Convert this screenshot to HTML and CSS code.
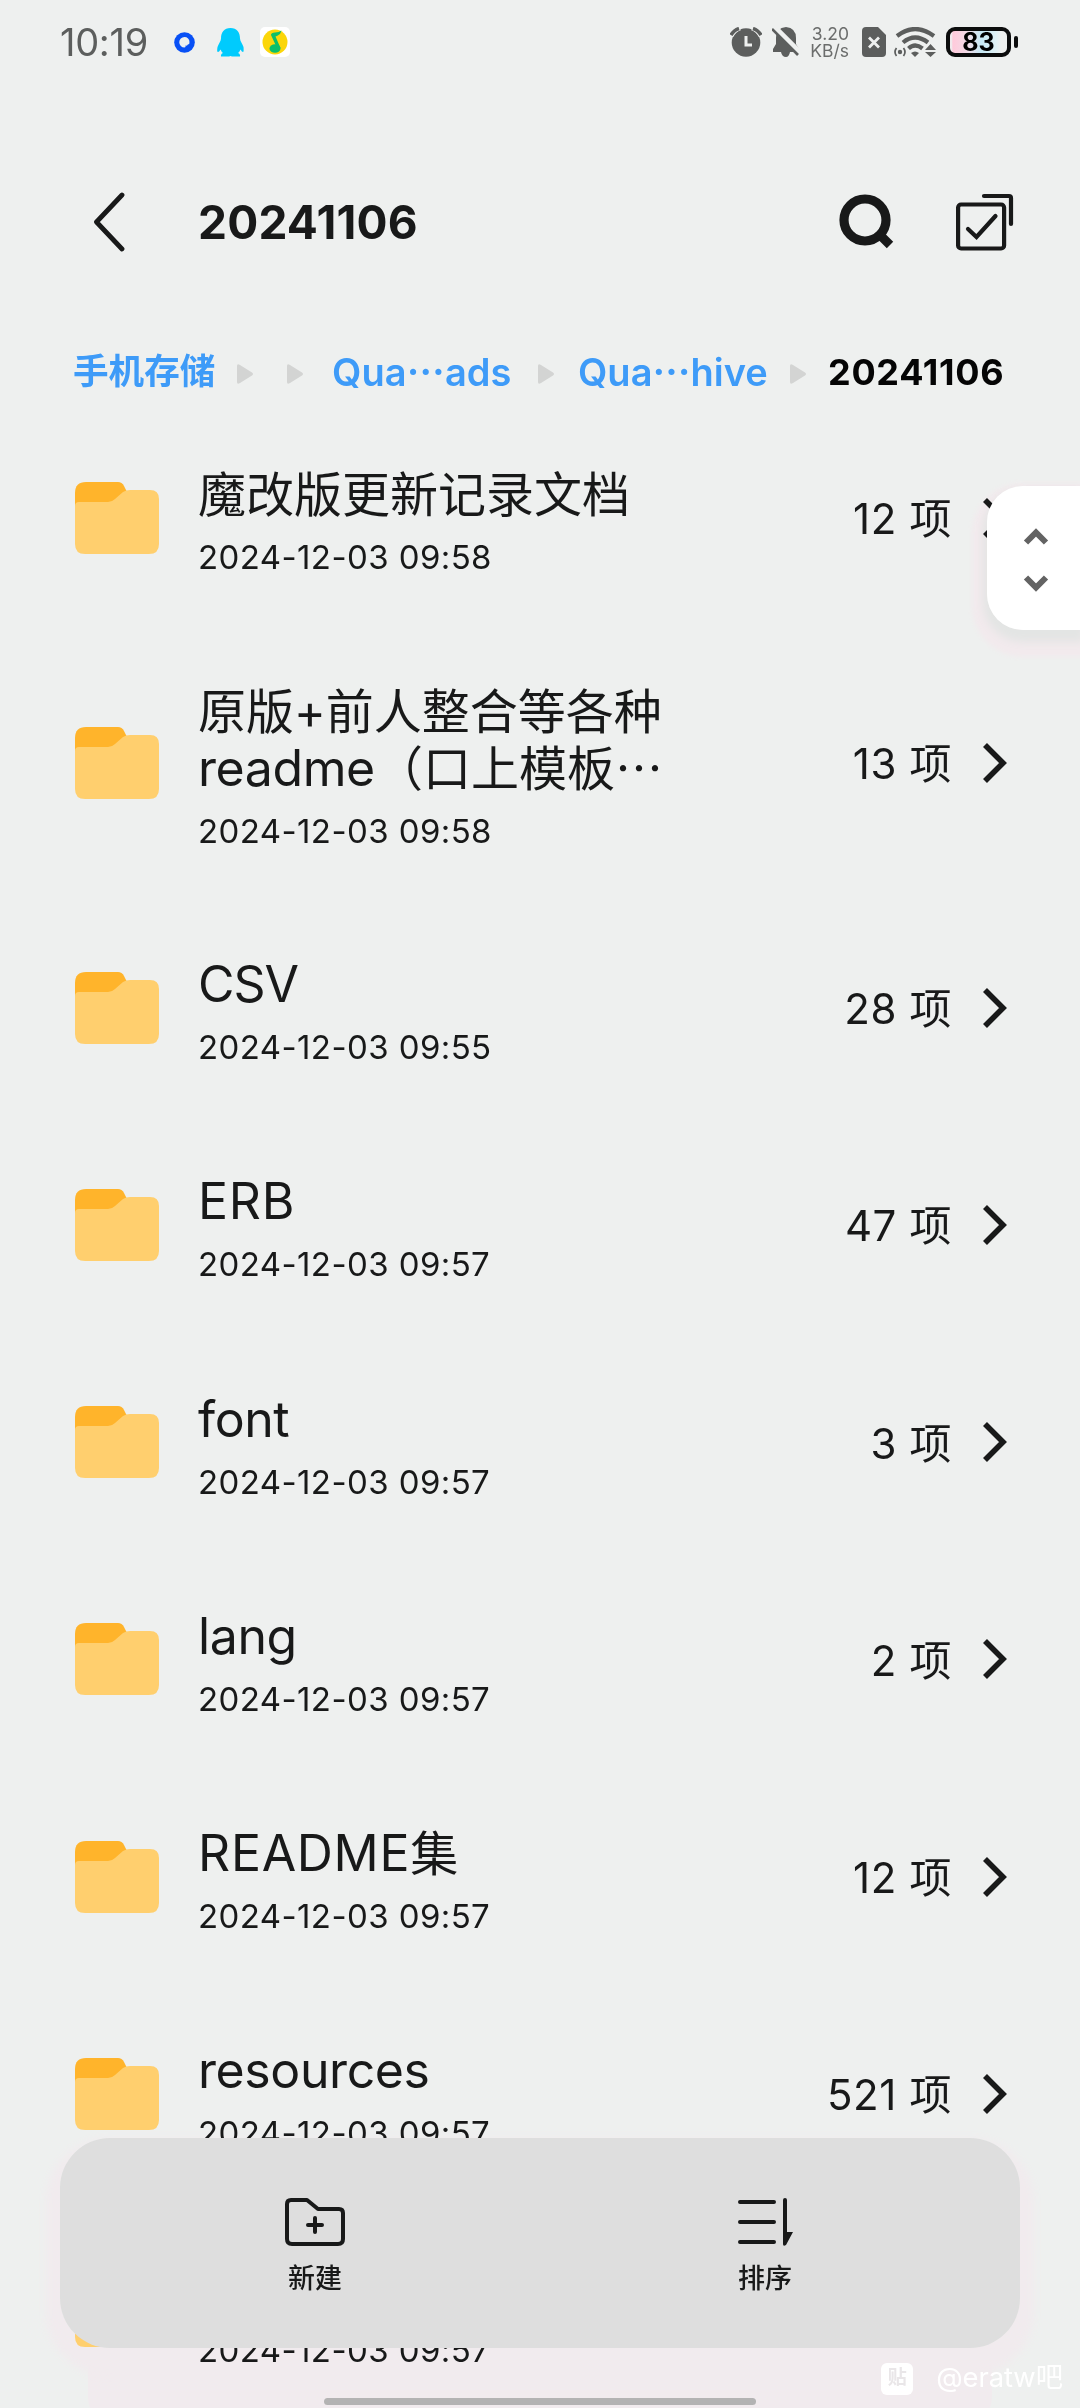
FILE: index.html
```html
<!DOCTYPE html>
<html lang="zh-CN">
<head>
    <meta charset="UTF-8">
    <meta name="viewport" content="width=device-width, initial-scale=1.0">
    <title>20241106</title>
    <link rel="stylesheet" href="styles.css">
</head>
<body>

    <!-- shared icons -->
    <svg class="symbols">
        <symbol id="folder" viewBox="0 0 84 72">
            <path fill="#ffb42b" d="M0 40V11Q0 0 11 0H43Q47 0 49 4L53 12V40Z"/>
            <path fill="#ffcf6e" d="M0 24Q0 20 4 20H33Q37 20 40 17L48 10Q51 8 55 8H75Q84 8 84 17V62Q84 72 74 72H10Q0 72 0 62Z"/>
        </symbol>
        <symbol id="next" viewBox="0 0 26 40">
            <path fill="none" stroke="#181919" stroke-width="5.6" d="M2 2L20 20L2 38"/>
        </symbol>
        <symbol id="tri" viewBox="0 0 16 20">
            <path fill="#d3d4d3" d="M0 2Q0-1 3 1L15 8.500Q17 10 15 11.500L3 19Q0 21 0 18Z"/>
        </symbol>
    </svg>

    <div class="status">
        <span class="time">10:19</span>
        <svg class="quark" width="21" height="21" viewBox="0 0 21 21">
            <circle cx="10.500" cy="10.500" r="10.300" fill="#0850f5"/>
            <path fill="#eef0ef" d="M10.500 5a5 5 0 1 0 0 10.500q1.500 0 1-2q2 .5 2.300-1q2 0 1.700-2.500a5 5 0 0 0-5-5z"/>
        </svg>
        <svg class="qq" width="27" height="29" viewBox="0 0 27 29">
            <path fill="#00cbfd" d="M13.500 0C7 0 4 4.500 4 10.500C4 13 1.500 16 .5 19C0 22 0 24 1 24Q2 24 3.500 21.500Q4.500 24 6 25Q3.500 26 4 28.500H12L13.500 28L15 28.500H23Q23.500 26 21 25Q22.500 24 23.500 21.500Q25 24 26 24Q27 24 26.500 19C25.500 16 23 13 23 10.500C23 4.500 20 0 13.500 0Z"/>
        </svg>
        <svg class="music" width="30" height="30" viewBox="0 0 30 30">
            <rect width="30" height="30" rx="5" fill="#fff"/>
            <circle cx="15" cy="15" r="12.500" fill="#fbd60a"/>
            <ellipse cx="15" cy="21.500" rx="5.500" ry="4.300" fill="#0bbf6a"/>
            <path fill="#0bbf6a" d="M21.500 3.500L20 7Q17 9 15.500 9.500L20.500 21H17L11 8Q11 5.500 15 5.500Q19 5.500 21.500 3.500Z"/>
        </svg>

        <svg class="alarm" width="32" height="30" viewBox="0 0 32 30">
            <circle cx="16" cy="15.500" r="14.300" fill="#5c5e5d"/>
            <path fill="none" stroke="#eef0ef" stroke-width="3" d="M16 9V18H22"/>
            <path fill="none" stroke="#eef0ef" stroke-width="5" d="M1 9Q4 3 10 1M31 9Q28 3 22 1"/>
            <path fill="none" stroke="#5c5e5d" stroke-width="3.500" d="M1 8Q4 3 9 1.500M31 8Q28 3 23 1.500"/>
        </svg>
        <svg class="bell" width="28" height="30" viewBox="0 0 28 30">
            <path fill="#5c5e5d" d="M14 0Q24 1 24 11V17L27 22V25H18Q17 30 14 30Q10 30 9 25H1V22L4 17V11Q4 1 14 0Z"/>
            <path stroke="#eef0ef" stroke-width="6" d="M2 0L28 26"/>
            <path stroke="#5c5e5d" stroke-width="2.600" d="M0 2L26 28"/>
        </svg>
        <div class="speed"><span>3.20</span><span>KB/s</span></div>
        <svg class="sim" width="24" height="30" viewBox="0 0 24 30">
            <path fill="#5c5e5d" d="M4 0H16L24 8V26Q24 30 20 30H4Q0 30 0 26V4Q0 0 4 0Z"/>
            <path stroke="#eef0ef" stroke-width="2.800" d="M7 10.500L17 20.500M17 10.500L7 20.500"/>
        </svg>
        <svg class="wifi" width="42" height="30" viewBox="0 0 42 30">
            <g fill="none" stroke="#5c5e5d" stroke-width="4.200">
                <path d="M3 9Q21-5 40 9"/>
                <path d="M9 15.500Q21 5.500 34 15.500"/>
                <path d="M14.500 21.500Q21 15.500 28.500 21.500"/>
            </g>
            <path fill="#5c5e5d" d="M17 26Q21 23 25 26L21 30Z"/>
            <circle cx="6" cy="25" r="2.200" fill="#5c5e5d"/>
            <path fill="none" stroke="#5c5e5d" stroke-width="1.700" d="M2.500 21Q-.5 25 2.500 29M9.500 21Q12.500 25 9.500 29"/>
            <path fill="#5c5e5d" d="M31 23L36.500 17L42 23ZM31 25L36.500 30L42 25Z"/>
        </svg>
        <div class="battery">83</div>
    </div>

    <div class="header">
        <svg class="back" width="34" height="60" viewBox="0 0 34 60">
            <path fill="none" stroke="#181919" stroke-width="4.800" stroke-linecap="round" stroke-linejoin="round" d="M29 3L3.500 30L29 57"/>
        </svg>
        <h1>20241106</h1>
        <svg class="search" width="56" height="56" viewBox="0 0 56 56">
            <circle cx="26" cy="26" r="21" fill="none" stroke="#181919" stroke-width="9.200"/>
            <path stroke="#181919" stroke-width="9" d="M40 40L51 51"/>
        </svg>
        <svg class="select" width="58" height="58" viewBox="0 0 58 58">
            <g fill="none" stroke="#181919" stroke-width="4.200" stroke-linecap="round" stroke-linejoin="round">
                <rect x="2.100" y="11.500" width="46" height="44" rx="3"/>
                <path d="M28 3H53Q55 3 55 5V31"/>
                <path stroke-linejoin="miter" d="M12 36L20.500 44L39.500 23"/>
            </g>
        </svg>
    </div>

    <div class="crumbs">
        <a class="root">手机存储</a>
        <svg class="tri"><use href="#tri"/></svg>
        <svg class="tri second"><use href="#tri"/></svg>
        <a class="ads">Qua<i>…</i>ads</a>
        <svg class="tri near"><use href="#tri"/></svg>
        <a class="hive">Qua<i>…</i>hive</a>
        <svg class="tri last"><use href="#tri"/></svg>
        <b>20241106</b>
    </div>

    <div class="list">
        <div class="row">
            <svg class="folder"><use href="#folder"/></svg>
            <div class="info"><p class="name">魔改版更新记录文档</p><p class="date">2024-12-03 09:58</p></div>
            <span class="count">12 项</span>
            <svg class="next"><use href="#next"/></svg>
        </div>
        <div class="row tall">
            <svg class="folder"><use href="#folder"/></svg>
            <div class="info"><p class="name">原版+前人整合等各种<br><span class="en">readme</span>（口上模板<i>…</i></p><p class="date">2024-12-03 09:58</p></div>
            <span class="count">13 项</span>
            <svg class="next"><use href="#next"/></svg>
        </div>
        <div class="row">
            <svg class="folder"><use href="#folder"/></svg>
            <div class="info"><p class="name"><span class="en tight">CSV</span></p><p class="date">2024-12-03 09:55</p></div>
            <span class="count">28 项</span>
            <svg class="next"><use href="#next"/></svg>
        </div>
        <div class="row">
            <svg class="folder"><use href="#folder"/></svg>
            <div class="info"><p class="name"><span class="en wide">ERB</span></p><p class="date">2024-12-03 09:57</p></div>
            <span class="count">47 项</span>
            <svg class="next"><use href="#next"/></svg>
        </div>
        <div class="row">
            <svg class="folder"><use href="#folder"/></svg>
            <div class="info"><p class="name"><span class="en">font</span></p><p class="date">2024-12-03 09:57</p></div>
            <span class="count">3 项</span>
            <svg class="next"><use href="#next"/></svg>
        </div>
        <div class="row">
            <svg class="folder"><use href="#folder"/></svg>
            <div class="info"><p class="name"><span class="en">lang</span></p><p class="date">2024-12-03 09:57</p></div>
            <span class="count">2 项</span>
            <svg class="next"><use href="#next"/></svg>
        </div>
        <div class="row">
            <svg class="folder"><use href="#folder"/></svg>
            <div class="info"><p class="name"><span class="en wide">README</span>集</p><p class="date">2024-12-03 09:57</p></div>
            <span class="count">12 项</span>
            <svg class="next"><use href="#next"/></svg>
        </div>
        <div class="row">
            <svg class="folder"><use href="#folder"/></svg>
            <div class="info"><p class="name"><span class="en">resources</span></p><p class="date">2024-12-03 09:57</p></div>
            <span class="count">521 项</span>
            <svg class="next"><use href="#next"/></svg>
        </div>
        <div class="row">
            <svg class="folder"><use href="#folder"/></svg>
            <div class="info"><p class="name">&nbsp;</p><p class="date">2024-12-03 09:57</p></div>
        </div>
    </div>

    <div class="jump-glow"></div>
    <div class="jump">
        <svg width="26" height="17" viewBox="0 0 26 17"><path fill="none" stroke="#636363" stroke-width="6" d="M3 14.500L13 4.500L23 14.500"/></svg>
        <svg width="26" height="17" viewBox="0 0 26 17"><path fill="none" stroke="#636363" stroke-width="6" d="M3 2.500L13 12.500L23 2.500"/></svg>
    </div>

    <div class="glow"></div>
    <div class="toolbar">
        <div class="tool">
            <svg width="60" height="48" viewBox="0 0 60 48">
                <g fill="none" stroke="#181919" stroke-width="4" stroke-linejoin="round" stroke-linecap="round">
                    <path d="M6 2H22L33 11H54Q58 11 58 15V41Q58 46 53 46H7Q2 46 2 41V6Q2 2 6 2Z"/>
                    <path d="M30 20V34M23 27H37"/>
                </g>
            </svg>
            <span>新建</span>
        </div>
        <div class="tool">
            <svg width="60" height="48" viewBox="0 0 60 48">
                <path stroke="#181919" stroke-width="4" stroke-linecap="round" d="M5 4H39M5 24H39M5 44H39"/>
                <path fill="#181919" d="M48 2Q48 0 50 0Q52 0 52 2V34H58L51 47Q48 49 48 46Z"/>
            </svg>
            <span>排序</span>
        </div>
    </div>

    <div class="home"></div>

    <div class="watermark">
        <span class="badge">贴</span>
        <span>@eratw吧</span>
    </div>

</body>
</html>
```
FILE: styles.css
```css
* {
    box-sizing: border-box;
}

body {
    font-family: Inter, "Noto Sans CJK SC", sans-serif;
    background: #eef0ef;
    color: #181919;
    margin: 0;
    height: 2408px;
    overflow: hidden;
}

svg {
    display: block;
    flex: none;
}

i {
    font-family: "Noto Sans CJK SC", sans-serif;
    font-style: normal;
    line-height: 0;
}

.symbols {
    position: absolute;
    width: 0;
    height: 0;
}

/* status bar */
.status {
    display: flex;
    align-items: center;
    height: 84px;
    padding-left: 60px;
}

.time {
    font-size: 38px;
    color: #5c5e5d;
    width: 114px;
    letter-spacing: -0.3px;
    white-space: nowrap;
}

.qq { margin-left: 22px; }
.music { margin-left: 16px; }
.alarm { margin-left: 440px; }
.bell { margin-left: 10px; }

.speed {
    display: flex;
    flex-direction: column;
    align-items: flex-end;
    width: 49px;
    margin-right: 13px;
    font-size: 17.5px;
    line-height: 17px;
    color: #6b6d6c;
}

.wifi { margin-left: 8px; }

.battery {
    position: relative;
    width: 65px;
    height: 30px;
    margin-left: 10px;
    border: 4px solid #0c0d0d;
    border-radius: 9px;
    background: linear-gradient(90deg, #f0eaed 3%, #ffcadb 5%, #f3dbe7 30%, #c5e9f5 55%, #dff1f5 80%, #eef0ef 90%);
    color: #000;
    font-size: 25px;
    font-weight: 700;
    line-height: 23px;
    text-align: center;
}

.battery::after {
    content: "";
    position: absolute;
    right: -11px;
    top: 5px;
    width: 4px;
    height: 12px;
    border-radius: 2px;
    background: #0c0d0d;
}

/* header */
.header {
    display: flex;
    align-items: center;
    height: 254px;
    padding: 22px 66px 0 93px;
}

.header h1 {
    flex: 1;
    margin: 0 0 0 71px;
    font-size: 46px;
    font-weight: 700;
    letter-spacing: 0.2px;
}

.select { margin-left: 61px; }

/* breadcrumb */
.crumbs {
    display: flex;
    align-items: center;
    height: 71px;
    padding-left: 73px;
    font-size: 38px;
    font-weight: 600;
    line-height: 70px;
    color: #3e9bf8;
    white-space: nowrap;
}

.crumbs a,
.crumbs b {
    padding-bottom: 3px;
}

.tri {
    width: 16px;
    height: 20px;
    margin-right: 34px;
}

.tri.second { margin-right: 29px; }
.tri.near { margin-right: 24px; }
.tri.last { margin-right: 22px; }

.root {
    width: 164px;
    font-size: 35.6px;
}

.ads {
    width: 206px;
    letter-spacing: 0.1px;
}

.hive { width: 212px; }

.crumbs b {
    color: #050505;
    font-size: 36px;
    font-weight: 700;
    letter-spacing: 0.7px;
}

/* file list */
.row {
    display: flex;
    align-items: center;
    height: 217.2px;
    padding: 0 71px 0 75px;
}

.row.tall {
    height: 273px;
}

.folder {
    width: 84px;
    height: 72px;
}

.info {
    flex: 1;
    margin-left: 39px;
    padding-top: 10px;
}

.info p {
    margin: 0;
}

.name {
    font-size: 48px;
    line-height: 57px;
    white-space: nowrap;
}

.name .en {
    font-size: 50px;
    letter-spacing: -0.4px;
    line-height: 0;
}

.name .tight { letter-spacing: -1px; }
.name .wide { letter-spacing: 0.7px; }

.info .date {
    margin-top: 13px;
    font-size: 33px;
    line-height: 43px;
    letter-spacing: 0.4px;
}

.count {
    padding-bottom: 4px;
    font-size: 42px;
    letter-spacing: 0.6px;
}

.next {
    width: 26px;
    height: 40px;
    margin-left: 31px;
}

/* jump handle on the right edge */
.jump,
.jump-glow {
    position: fixed;
    top: 486px;
    right: 0;
    width: 93px;
    height: 144px;
    border-radius: 36px 0 0 36px;
}

.jump {
    display: flex;
    flex-direction: column;
    align-items: center;
    justify-content: center;
    gap: 30px;
    padding-top: 3px;
    padding-left: 5px;
    background: #fff;
}

.jump-glow {
    z-index: -1;
    box-shadow: 0 8px 8px 4px #e3e5e4, 0 12px 5px 15px #f2eaed;
}

/* bottom toolbar */
.toolbar,
.glow {
    position: fixed;
    left: 60px;
    top: 2138px;
    width: 960px;
    height: 210px;
    border-radius: 50px;
}

.toolbar {
    display: flex;
    padding: 60px 30px 0;
    background: #dedede;
}

/* tint sits under the list rows */
.glow {
    z-index: -1;
    box-shadow: 0 14px 8px 14px #f1ebee, 0 100px 0 -28px #f1ebee;
}

.tool {
    flex: 1;
    display: flex;
    flex-direction: column;
    align-items: center;
    font-size: 27px;
    font-weight: 500;
}

.tool span {
    margin-top: 13px;
    line-height: 40px;
}

.home {
    position: fixed;
    left: 324px;
    top: 2398px;
    width: 432px;
    height: 7px;
    border-radius: 4px;
    background: #b3b3b3;
}

.watermark {
    position: fixed;
    right: 17px;
    top: 2360px;
    display: flex;
    align-items: center;
    gap: 23px;
    height: 38px;
    font-size: 27.3px;
    line-height: 34px;
    color: #fff;
}

.watermark span {
    margin-bottom: 2px;
}

.watermark .badge {
    width: 32px;
    height: 32px;
    margin-bottom: 0;
    border-radius: 6px;
    background: #fff;
    color: #e9e6e8;
    font-size: 19px;
    font-weight: 700;
    line-height: 30px;
    text-align: center;
}
```
